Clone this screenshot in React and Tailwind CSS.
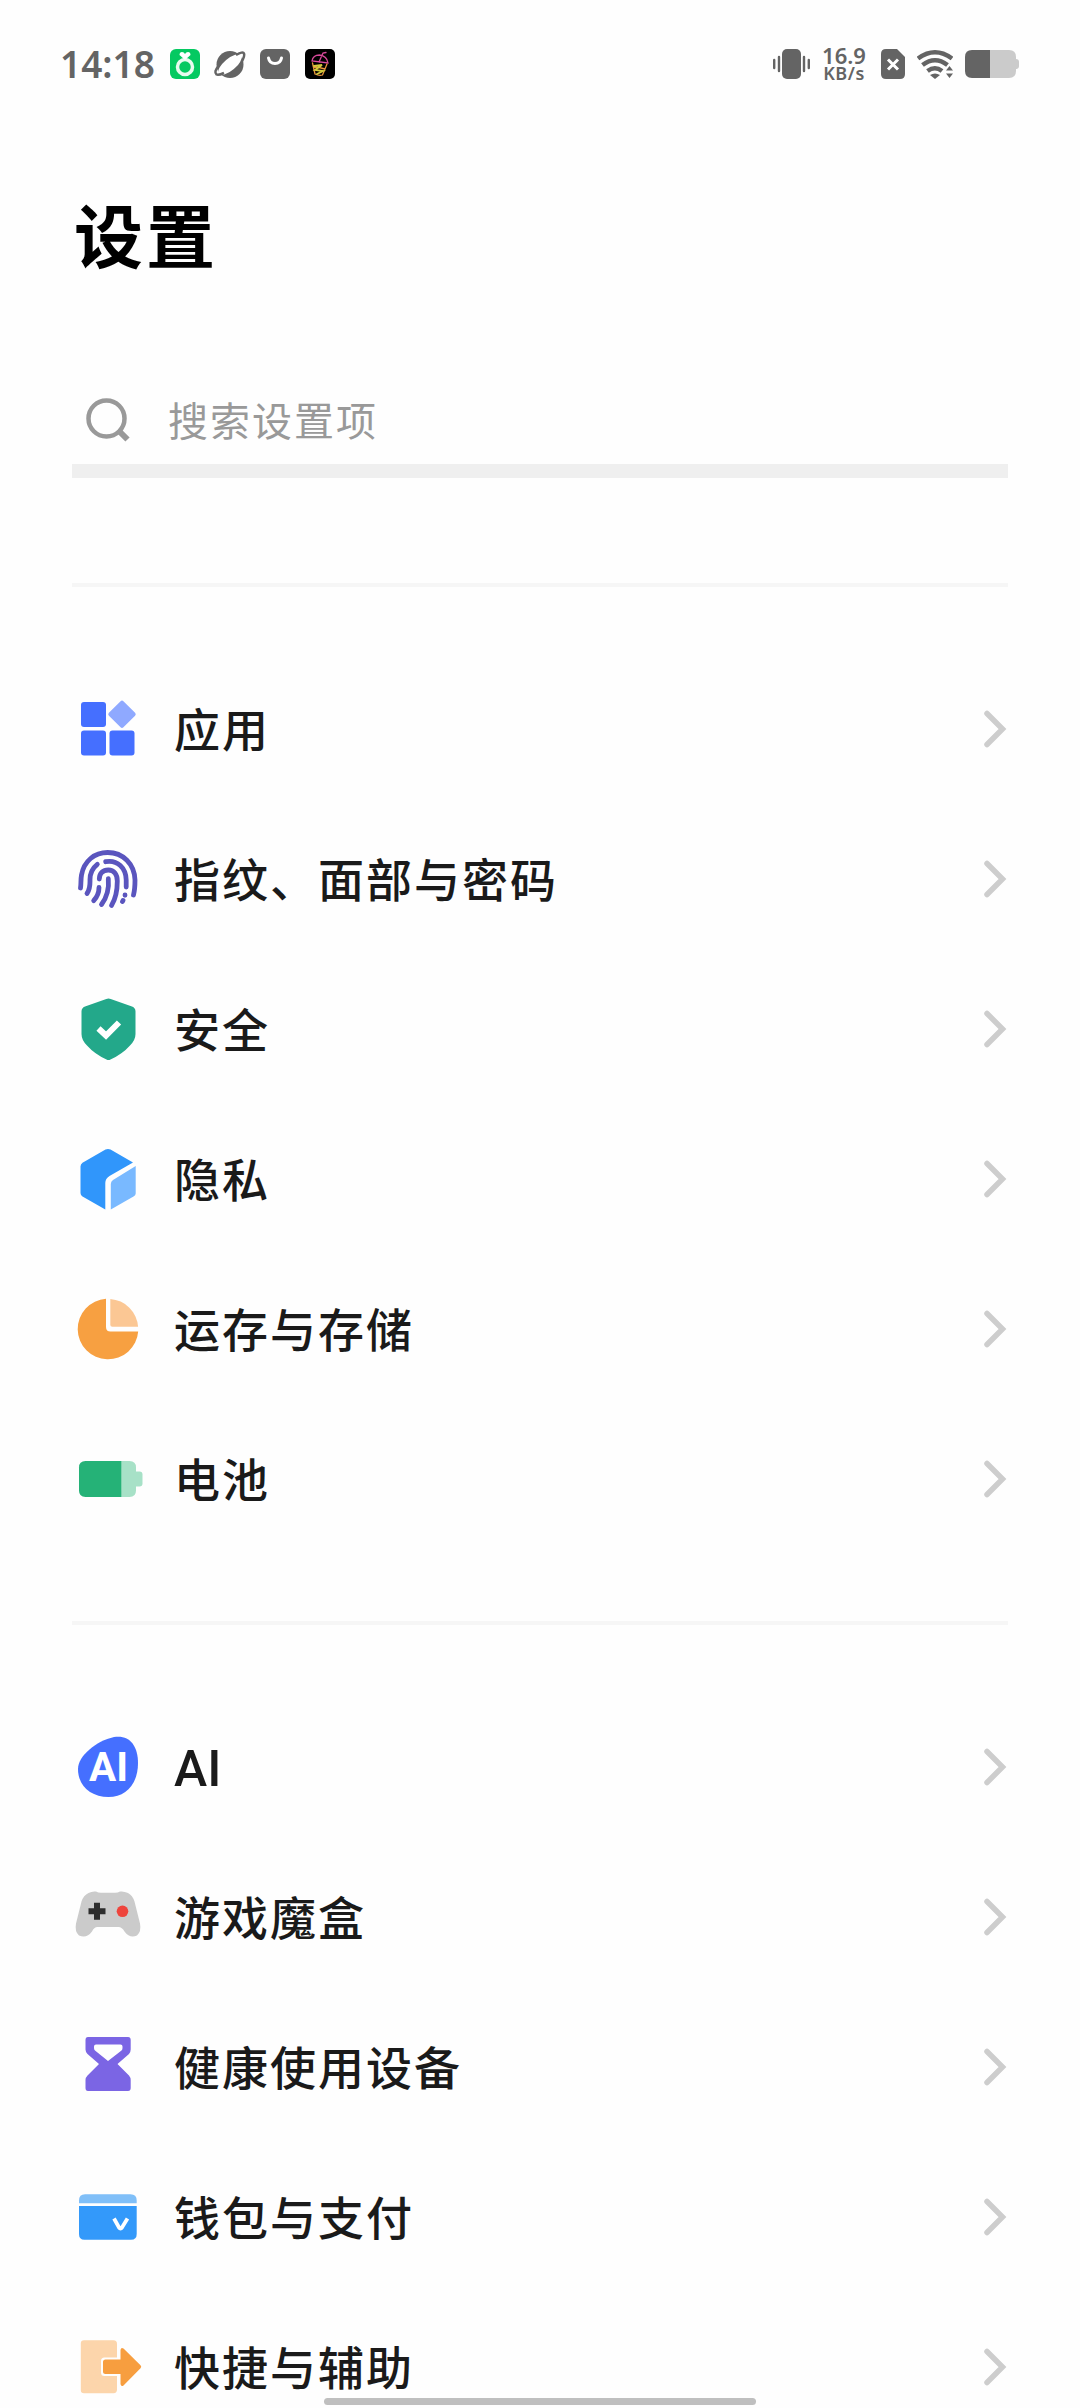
const cjk = "font-['Noto_Sans_CJK_SC','Noto_Sans',sans-serif]";

function AppsIcon() {
  return (
    <>
      <g fill="#456fff">
        <rect x="13" y="13" width="25" height="25" rx="3" />
        <rect x="13" y="41.5" width="25" height="25" rx="3" />
        <rect x="41.5" y="41.5" width="25" height="25" rx="3" />
      </g>
      <rect x="43.750" y="15" width="20.500" height="20.500" rx="2" fill="#8fa9ff" transform="rotate(45 54 25.250)" />
    </>
  );
}

function FingerprintIcon() {
  return (
    <g fill="none" stroke="#5a55be" strokeWidth="4.800" strokeLinecap="round" strokeLinejoin="round">
      <path d="M12.500 49C13.200 45 12.600 41 13.500 36C16 22 26.500 13.500 39.700 13.500C55 13.500 66.500 25 67 41C67 47 66.800 51 65.500 56" />
      <path d="M19 54.500C22.500 49.500 22 45 22 40.500C22 34 24 29.500 29.300 25.300" />
      <path d="M37.700 22.700C49.500 20.500 58 29 58.200 41V48" />
      <path d="M31.300 40C31.300 34 35 31 40.300 31C46 31 49.300 35.500 49.300 42C49.300 52 47.500 60 43.500 66.500" />
      <path d="M40.300 39.700C41.300 50 39 58 33.500 65.500" />
      <path d="M31 48.500C31 53.500 29.500 57.500 25.700 61.700" />
      <path d="M57 56V56.300M55 61.500L54.500 62.500" />
    </g>
  );
}

function ShieldIcon() {
  return (
    <g transform="translate(0 1)">
      <path d="M38.300 9Q40.500 8 42.700 9L64 16.500Q67.500 17.800 67.500 21.500V44Q67.500 50 62 55.500Q54.500 64 42.500 69.500Q40.500 70.500 38.500 69.500Q26.500 64 19 55.500Q13.500 50 13.500 44V21.500Q13.500 17.800 17 16.500Z" fill="#23a88a" />
      <path d="M30.500 38.500L38 45.500L51 32.500" fill="none" stroke="#fff" strokeWidth="6" />
    </g>
  );
}

function CubeIcon() {
  return (
    <g transform="translate(0 1.500)">
      <path d="M37.500 9Q40 7.800 42.500 9L65 22L41.500 35.500Q37.300 38 37.300 42.500V69L14.500 56Q12.500 54.700 12.500 52.500V26Q12.500 23.700 14.500 22.300Z" fill="#3096fb" />
      <path d="M67.700 25.500V53Q67.700 55 65.500 56L42.800 69V43.500Q42.800 41 45 39.500Z" fill="#79b9ff" />
    </g>
  );
}

function StorageIcon() {
  return (
    <>
      <path d="M38 9.800V38Q38 42.500 42.500 42.500H70.200A30.300 30.300 0 1 1 38 9.800Z" fill="#f7a041" />
      <path d="M42.300 9.900A30.200 30.200 0 0 1 70.100 37.800H44.300Q42.300 37.800 42.300 35.800Z" fill="#fbc794" />
    </>
  );
}

function BatteryIcon() {
  return (
    <>
      <path d="M53 22H61.500Q68 22 68 28.500V32.500H71.500Q74.500 32.500 74.500 35.500V44.500Q74.500 47.500 71.500 47.500H68V51.500Q68 58 61.500 58H53Z" fill="#a7e1c7" />
      <path d="M17.500 22H53.300V58H17.500Q11 58 11 51.500V28.500Q11 22 17.500 22Z" fill="#25b277" />
    </>
  );
}

function AiIcon() {
  return (
    <>
      <path d="M46 10C61 7.500 70 18 70 36C70 57 58 70 40.500 70C23 70 10 59 10 42C10 29 28 14 46 10Z" fill="#456fff" />
      <text x="21" y="54" fill="#fff" fontSize="40" fontWeight="700" textLength="39" lengthAdjust="spacingAndGlyphs" className="font-[Roboto,sans-serif]">AI</text>
    </>
  );
}

function GamepadIcon() {
  return (
    <>
      <path d="M20.500 16Q24 14 28 14.500Q30 15.800 33 15.800H47Q50 15.800 52 14.500Q56 14 60 16Q64.500 18.300 66.500 24.500L72 46.500Q73.500 54.500 69 58.500Q62 62 56.500 54.500Q54 50 50.500 50H29.500Q26 50 24 54.500Q18.500 62 11 58.500Q6.500 54.500 8 46.500L13.500 24.500Q15.500 18.300 20.500 16Z" fill="#cbcbcb" />
      <path d="M26 25.800h6v5.500h5.500v6H32v5.500h-6v-5.500h-5.500v-6H26Z" fill="#2d2d2d" />
      <circle cx="54.500" cy="34.300" r="5.800" fill="#ee443c" />
    </>
  );
}

function HourglassIcon() {
  return (
    <path
      transform="translate(0 1)"
      fillRule="evenodd"
      fill="#7b65e4"
      d="M20 9H60Q62.700 9 62.700 12V21.500Q62.700 24 61 26L49.500 36L61 47.500Q62.700 49.500 62.700 52V60Q62.700 63 60 63H20Q17.500 63 17.500 60V52Q17.500 49.500 19.500 47.500L31 36L19.500 26Q17.500 24 17.500 21.500V12Q17.500 9 20 9ZM28 16.500Q26 16.500 26 18.500V20Q26 21.500 27 22.500L40 33L53.500 22.500Q54.500 21.500 54.500 20V18.500Q54.500 16.500 52.500 16.500Z"
    />
  );
}

function WalletIcon() {
  return (
    <>
      <path d="M11 26.300V23.500Q11 17.200 17 17.200H62.500Q68.700 17.200 68.700 23.500V26.300Z" fill="#80bff8" />
      <path d="M11 29H68.700V57Q68.700 62.800 63 62.800H16.500Q11 62.800 11 57Z" fill="#3399fa" />
      <path d="M46 41.500L51 50.500Q52.500 52.500 54 50.500L59.500 41.500" fill="none" stroke="#fff" strokeWidth="3.800" />
    </>
  );
}

function ShortcutIcon() {
  return (
    <g transform="translate(0 1)">
      <path d="M16 12.300H45.500Q49 12.300 49 16V29.500H36.500Q33 29.500 33 33V44.500Q33 48 36.500 48H49V61.500Q49 65.200 45.500 65.200H16Q12.800 65.200 12.800 62V15.500Q12.800 12.300 16 12.300Z" fill="#fcd5ab" />
      <path d="M35 34Q35 31.500 37.500 31.500H52.500V22Q53 19 55.500 20.500L72.500 37.300Q74 38.800 72.500 40.300L55.500 57.500Q53 59 52.500 56V46H37.500Q35 46 35 43.500Z" fill="#f79e3f" />
    </g>
  );
}

const groups = [
  [
    { label: '应用', Icon: AppsIcon },
    { label: '指纹、面部与密码', Icon: FingerprintIcon },
    { label: '安全', Icon: ShieldIcon },
    { label: '隐私', Icon: CubeIcon },
    { label: '运存与存储', Icon: StorageIcon },
    { label: '电池', Icon: BatteryIcon },
  ],
  [
    { label: 'AI', Icon: AiIcon, latin: true },
    { label: '游戏魔盒', Icon: GamepadIcon },
    { label: '健康使用设备', Icon: HourglassIcon },
    { label: '钱包与支付', Icon: WalletIcon },
    { label: '快捷与辅助', Icon: ShortcutIcon },
  ],
];

function Row({ label, Icon, latin }) {
  return (
    <li className="flex h-[150px] shrink-0 items-center">
      <svg className="-ml-1 h-20 w-20 shrink-0" viewBox="0 0 80 80">
        <Icon />
      </svg>
      <span
        className={
          latin
            ? 'ml-[26px] flex-1 pt-1 font-[Roboto,sans-serif] text-[50px] leading-[66px] font-medium text-[#1a1a1a]'
            : 'ml-[26px] flex-1 pb-1 text-[46px] leading-[66px] font-medium tracking-[2px] text-[#1a1a1a]'
        }
      >
        {label}
      </span>
      <svg className="h-10 w-6 shrink-0" viewBox="0 0 24 40" fill="none" stroke="#cdcdcd" strokeWidth="5.500" strokeLinecap="round">
        <path d="M3 4.500L18.500 20L3 35.500" />
      </svg>
    </li>
  );
}

function StatusBar() {
  return (
    <header className="flex h-32 shrink-0 items-center justify-between pr-[61px] pl-[60px] text-[#646464]">
      <div className="flex items-center">
        <span className="w-[110px] pb-[2px] font-['Noto_Sans',sans-serif] text-[37px] leading-none font-semibold whitespace-nowrap">14:18</span>
        <svg className="h-[30px] w-[166px]" viewBox="0 0 166 30">
          <rect width="30" height="30" rx="6" fill="#05c961" />
          <circle cx="15" cy="18" r="7.500" fill="none" stroke="#e8fbef" strokeWidth="3.500" />
          <path d="M15 11L9.500 6Q9.500 3 12 3Q14 3 15 5Q16 3 18 3Q20.500 3 20.500 6Z" fill="#fff" />
          <circle cx="60" cy="15.500" r="13.500" fill="#646464" />
          <ellipse cx="60" cy="15.500" rx="14.500" ry="6" fill="#fff" transform="rotate(-40 60 15.500)" />
          <path d="M48.500 17Q43.500 23 46.500 25.500Q48.500 26.500 54 24M66 6Q73 2 74 4.500Q75 7 71.500 13" fill="none" stroke="#646464" strokeWidth="2.500" />
          <rect x="90" width="30" height="30" rx="6" fill="#646464" />
          <path d="M98.500 9Q99.500 14.500 105 14.500T111.500 9" fill="none" stroke="#fff" strokeWidth="3" strokeLinecap="round" />
          <rect x="135" width="30" height="30" rx="5" fill="#000" />
          <g fill="none" strokeWidth="1.300" strokeLinecap="round">
            <path d="M142 12Q143 6 149.500 6Q157 7 158 14L142 12ZM149 13L153 4L156 3.500" stroke="#d8499b" />
            <path d="M142.500 14L145 25Q149 27 152.500 26L157 15M143 17L155 20" stroke="#e8953d" />
            <path d="M144 17L152 16L145 21L153 22L147 25" stroke="#d2c93b" strokeWidth="1.800" />
          </g>
        </svg>
      </div>

      <div className="flex items-center">
        <svg className="h-[30px] w-[37px]" viewBox="0 0 37 30" fill="#646464">
          <rect x="9" width="19" height="30" rx="5" />
          <path d="M1.200 11V19M6 8V22M31 8V22M35.800 11V19" stroke="#646464" strokeWidth="2.400" strokeLinecap="round" />
        </svg>
        <div className="mr-[14px] ml-[11px] flex w-[46px] flex-col items-center font-['Noto_Sans',sans-serif] whitespace-nowrap">
          <span className="text-[22px] leading-[18px] font-semibold">16.9</span>
          <span className="text-[18px] leading-[19px] font-semibold tracking-[0.500px]">KB/s</span>
        </div>
        <svg className="h-[30px] w-6" viewBox="0 0 24 30">
          <path d="M5 0H16L24 8V25Q24 30 19 30H5Q0 30 0 25V5Q0 0 5 0Z" fill="#646464" />
          <path d="M7 10.500L17 20.500M17 10.500L7 20.500" stroke="#fff" strokeWidth="3" />
        </svg>
        <svg className="ml-[12px] h-[30px] w-9" viewBox="0 0 36 30" fill="none" stroke="#646464" strokeWidth="4.500">
          <path d="M1 9.500Q18 -3 35 9.500M5.500 16Q18 6.500 30.500 16M10.500 22Q18 16.500 25 22" />
          <path d="M13 26Q18 23 23 26L18 30Z" fill="#646464" stroke="none" />
          <path d="M29 21.500L32.500 17L36 21.500ZM29 24.500H36L32.500 29Z" fill="#646464" stroke="none" />
        </svg>
        <svg className="ml-[12px] h-[28px] w-[54px]" viewBox="0 0 54 28">
          <path d="M25 0H44Q51 0 51 7V9Q54 9 54 12V16Q54 19 51 19V21Q51 28 44 28H25Z" fill="#cbcbcb" />
          <path d="M7 0H25V28H7Q0 28 0 21V7Q0 0 7 0Z" fill="#646464" />
        </svg>
      </div>
    </header>
  );
}

export default function App() {
  return (
    <div className={`relative flex h-[2408px] w-[1080px] flex-col overflow-hidden bg-[#fefefe] ${cjk}`}>
      <StatusBar />

      <main className="flex shrink-0 flex-col px-[72px]">
        <h1 className="mt-[55px] ml-[2px] text-[69px] leading-[100px] font-bold tracking-[3px] text-black">设置</h1>

        <div className="mt-[93px] flex h-[88px] items-center">
          <svg className="ml-[14px] h-11 w-11" viewBox="0 0 44 44" fill="none" stroke="#999" strokeWidth="4.500">
            <circle cx="20.500" cy="20.500" r="18" />
            <path d="M33 33L41.500 41.500" strokeWidth="6" />
          </svg>
          <span className="ml-[38px] pb-[2px] text-[40px] leading-[58px] tracking-[2px] text-[#999]">搜索设置项</span>
        </div>
        <div className="h-[14px] bg-[#efefef]" />

        {groups.map((rows, i) => (
          <section key={i} className={i === 0 ? 'mt-[105px]' : 'mt-[67px]'}>
            <div className="h-1 bg-[#f6f6f6]" />
            <ul className="mt-[67px] flex flex-col">
              {rows.map((row) => (
                <Row key={row.label} {...row} />
              ))}
            </ul>
          </section>
        ))}
      </main>

      {/* gesture bar */}
      <div className="absolute bottom-[3px] left-[324px] h-[7px] w-[432px] rounded-full bg-[#bfbfbf]" />
    </div>
  );
}
